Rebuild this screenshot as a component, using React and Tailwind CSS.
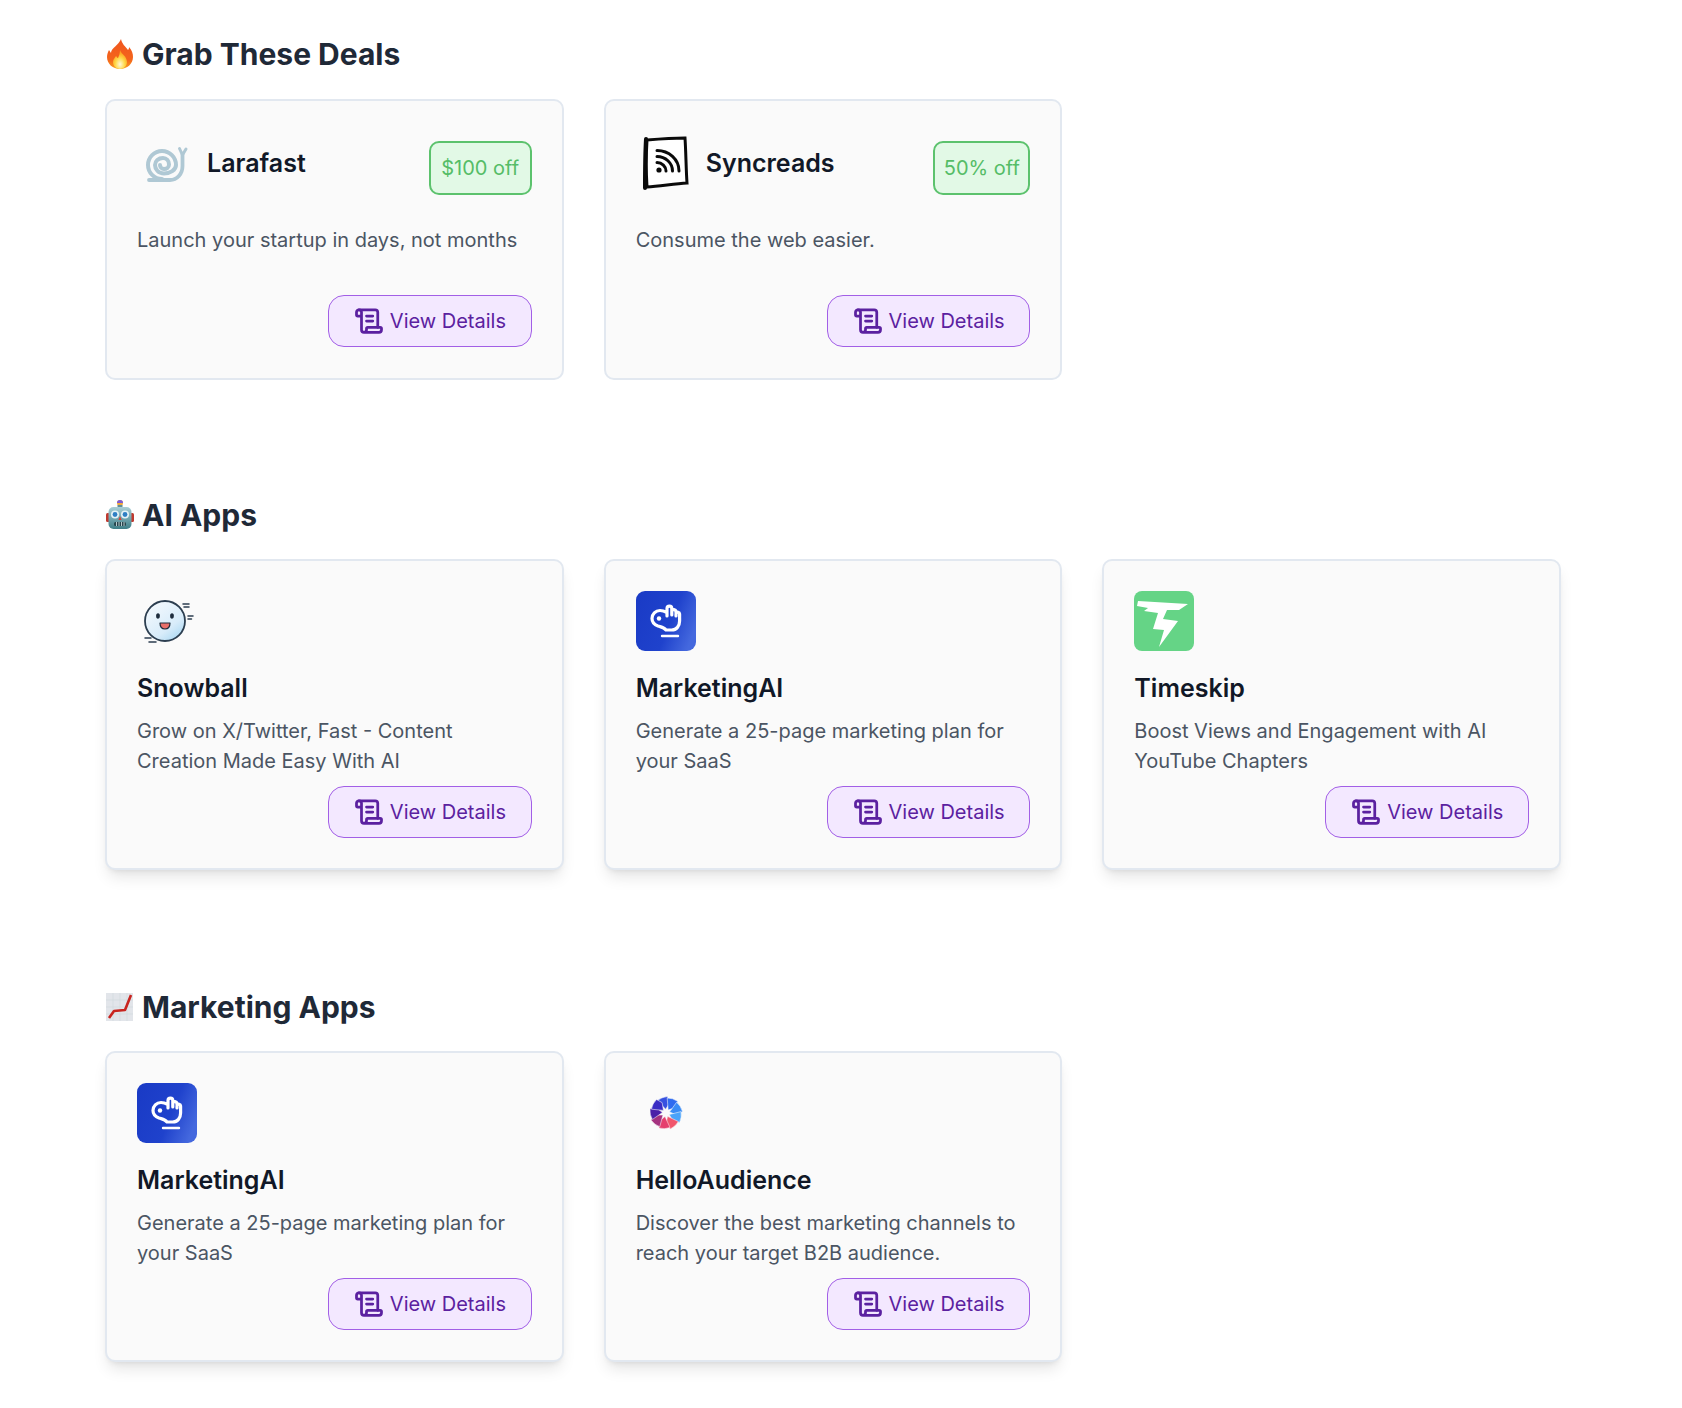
import { ScrollText } from "lucide-react";

const FireEmoji = () => (
  <svg viewBox="0 0 28 32" className="w-[28px] h-[32px] shrink-0">
    <defs>
      <linearGradient id="fireOuter" x1="0" y1="0" x2="0" y2="1">
        <stop offset="0" stopColor="#f0541e" />
        <stop offset="0.7" stopColor="#f4661c" />
        <stop offset="1" stopColor="#f9a11f" />
      </linearGradient>
      <radialGradient id="fireInner" cx="0.5" cy="0.75" r="0.6">
        <stop offset="0" stopColor="#fff8d8" />
        <stop offset="0.55" stopColor="#ffd94a" />
        <stop offset="1" stopColor="#fba41f" />
      </radialGradient>
    </defs>
    <path fill="url(#fireOuter)" d="M15 1c1 5 4 7 7 11 1-1 1-2 1-3 3 3 4 7 4 10 0 7-6 12-13 12S1 26 1 19c0-3 1-5 2-7l2 3c0-5 8-8 10-14z" />
    <path fill="url(#fireInner)" d="M14 12c1 4 7 6 7 12 0 4-3 7-7 7s-7-3-7-7c0-3 2-4 3-6 1 1 1 2 2 2 1-2 2-5 2-8z" />
  </svg>
);

const RobotEmoji = () => (
  <svg viewBox="0 0 28 32" className="w-[28px] h-[32px] shrink-0">
    <defs>
      <linearGradient id="robotHead" x1="0" y1="0" x2="0" y2="1">
        <stop offset="0" stopColor="#a9cfd6" />
        <stop offset="1" stopColor="#3f7f88" />
      </linearGradient>
    </defs>
    <circle cx="14" cy="4" r="3" fill="#f2a93b" />
    <path d="M11 4a3 3 0 0 1 6 0z" fill="#7c5cd6" />
    <rect x="11.5" y="6" width="5" height="3" fill="#5f8e98" />
    <rect x="0" y="14" width="4" height="9" rx="1.5" fill="#c0392f" />
    <rect x="24" y="14" width="4" height="9" rx="1.5" fill="#c0392f" />
    <rect x="2.5" y="8" width="23" height="22" rx="5" fill="url(#robotHead)" />
    <circle cx="9" cy="15.5" r="4" fill="#e6f2f6" />
    <circle cx="19" cy="15.5" r="4" fill="#e6f2f6" />
    <circle cx="9" cy="15.5" r="2.4" fill="#2f7fc4" />
    <circle cx="19" cy="15.5" r="2.4" fill="#2f7fc4" />
    <path d="M14 17l1.6 4h-3.2z" fill="#d4433a" />
    <rect x="8" y="23" width="12" height="4" rx="1.5" fill="#26464d" />
    <path d="M10.5 23v4M13 23v4M15.5 23v4M18 23v4" stroke="#b9c9cc" strokeWidth="1" />
  </svg>
);

const ChartEmoji = () => (
  <svg viewBox="0 0 28 32" className="w-[28px] h-[32px] shrink-0">
    <rect x="0" y="2" width="27" height="28" fill="#e2e5ea" />
    <path d="M0 9h27M0 16h27M0 23h27M7 2v28M14 2v28M21 2v28" stroke="#d2d6dc" strokeWidth="0.6" />
    <path d="M3 27l5-7 11-1 6-15" fill="none" stroke="#c8241f" strokeWidth="2.6" strokeLinejoin="round" />
  </svg>
);

const SnailLogo = () => (
  <svg viewBox="0 0 60 60" className="w-[60px] h-[60px] shrink-0" fill="none" stroke="#afc8d4" strokeLinecap="round" strokeLinejoin="round">
    <path strokeWidth="3.8" d="M12 47H33C40 47 45.500 41 45.500 33V21" />
    <path strokeWidth="3" d="M45 21L42.500 15.500M46 21L49 16" />
    <path strokeWidth="4" d="M25 46A14 14 0 1 1 39 32C39 37 33 40.500 27 40.500C21.500 40.500 18 36.500 18 32C18 28 21.500 25 26 25C29.500 25 32 28 32 31.500C32 34.500 29.500 36 27 36C24.500 36 23 34 23 32" />
  </svg>
);

const SyncreadsLogo = () => (
  <svg viewBox="0 0 60 60" className="w-[60px] h-[60px] shrink-0" fill="none" stroke="#0a0a0a" strokeLinecap="round">
    <path strokeWidth="3" fill="#ffffff" d="M11 7c12-1 26-2 38-2 1 15 1 31 2 45-13 1-27 3-40 4-1-15-1-31 0-47z" />
    <path strokeWidth="4" d="M10 6c-1 16-1 33-1 49" />
    <circle cx="23" cy="37" r="2.6" fill="#0a0a0a" stroke="none" />
    <path strokeWidth="3" d="M21 29.500c5 0 9 4 9 8.500M21 23.500c8.500 0 15.500 6.500 15.500 14.500M21 17.500c12 0 22 9 22 20.500" />
  </svg>
);

const SnowballLogo = () => (
  <svg viewBox="0 0 60 60" className="w-[60px] h-[60px] shrink-0">
    <defs>
      <linearGradient id="snowBody" x1="0.2" y1="0.1" x2="0.8" y2="0.9">
        <stop offset="0" stopColor="#f2f8fd" />
        <stop offset="0.7" stopColor="#d8ecfa" />
        <stop offset="1" stopColor="#b4dcf4" />
      </linearGradient>
    </defs>
    <g transform="translate(0 1)">
      <circle cx="28" cy="29" r="20" fill="url(#snowBody)" stroke="#2c3e50" strokeWidth="1.8" />
      <ellipse cx="21" cy="24" rx="1.9" ry="2.8" fill="#1f2d3d" />
      <ellipse cx="35" cy="24" rx="1.9" ry="2.8" fill="#1f2d3d" />
      <path d="M23 31h10c0 4-2.200 6-5 6s-5-2-5-6z" fill="#e86f6a" stroke="#1f2d3d" strokeWidth="1.200" strokeLinejoin="round" />
      <path d="M46 12h6M47 15h5M51 24h5M51 27h3.500M8 46h6M12 50h7" stroke="#2c3e50" strokeWidth="1.500" strokeLinecap="round" />
    </g>
  </svg>
);

const MarketingLogo = () => (
  <svg viewBox="0 0 60 60" className="w-[60px] h-[60px] shrink-0">
    <defs>
      <linearGradient id="marketingBg" x1="0" y1="0.2" x2="1" y2="0.6">
        <stop offset="0" stopColor="#1a3bc6" />
        <stop offset="0.6" stopColor="#1f42cc" />
        <stop offset="1" stopColor="#4468de" />
      </linearGradient>
    </defs>
    <rect width="60" height="60" rx="9" fill="url(#marketingBg)" />
    <path
      fill="none"
      stroke="#ffffff"
      strokeWidth="3.200"
      strokeLinecap="round"
      strokeLinejoin="round"
      d="M31 25V17.500a2.400 2.400 0 0 1 4.800 0V24M35.800 20a2.200 2.200 0 0 1 4.200 0.500V25M40 22a2 2 0 0 1 3.600 1V30c0 5-3 9-8 9H30c-2-3-5-3-8-4-4-1.500-6-4-6-7.500 0-4.500 3.500-8 8-8 3 0 5 1 7 2"
    />
    <circle cx="23" cy="27.500" r="2.200" fill="#ffffff" />
    <path d="M26 45h16" stroke="#ffffff" strokeWidth="2.400" strokeLinecap="round" />
  </svg>
);

const TimeskipLogo = () => (
  <svg viewBox="0 0 60 60" className="w-[60px] h-[60px] shrink-0">
    <rect width="60" height="60" rx="8" fill="#65d486" />
    <path fill="#ffffff" d="M4 10l50 3-9 6H33l-4 9 15 2-19 26 5-17-11-1 5-16-14-2 4-3-11-2z" />
  </svg>
);

const audiencePetals = [
  ["#3651e0", -20],
  ["#2f6bf0", 20],
  ["#3a8cf6", 60],
  ["#4aa3fa", 100],
  ["#f0566c", 140],
  ["#e53f6d", 180],
  ["#a5327f", 220],
  ["#4b20a8", 260],
  ["#3a2cc4", 300],
];

const AudienceLogo = () => (
  <svg viewBox="0 0 60 60" className="w-[60px] h-[60px] shrink-0">
    {audiencePetals.map(([color, angle]) => (
      <path
        key={angle}
        d="M31 26.500L26 15.500Q31 13.500 37 15L37 21.500z"
        fill={color}
        stroke="#fafafa"
        strokeWidth="0.5"
        strokeLinejoin="round"
        transform={`rotate(${angle} 30 30)`}
      />
    ))}
  </svg>
);

const ViewDetails = () => (
  <button className="self-end w-[203.5px] h-[52px] flex items-center justify-center gap-[6px] rounded-2xl border border-[#a25fe6] bg-[#f3e8ff] text-[#5b21a0] text-[20px]">
    <ScrollText className="w-[30px] h-[30px]" strokeWidth={2.2} />
    View Details
  </button>
);

const DealCard = ({ logo, name, deal, badgeWidth, desc }) => (
  <div className="flex flex-col rounded-[10px] border-2 border-[#e2e8f0] bg-[#fafafa] px-[30px] pt-[32px] pb-[31px]">
    <div className="flex justify-between">
      <div className="flex items-center gap-[10px] h-[60px]">
        {logo}
        <h3 className="pt-[2px] text-[25px] font-semibold text-[#111827]">{name}</h3>
      </div>
      <span className={`${badgeWidth} mt-[8px] h-[54px] flex items-center justify-center whitespace-nowrap rounded-[10px] border-2 border-[#5cc26d] bg-[#e2f9e6] text-[#55bd67] text-[20px]`}>
        {deal}
      </span>
    </div>
    <p className="mt-[30px] text-[20px] leading-[30px] text-[#4b5563]">{desc}</p>
    <div className="mt-[40px] flex flex-col">
      <ViewDetails />
    </div>
  </div>
);

const AppCard = ({ logo, name, desc }) => (
  <div className="flex flex-col rounded-[10px] border-2 border-[#e2e8f0] bg-[#fafafa] px-[30px] pt-[30px] pb-[30px] shadow-lg">
    {logo}
    <h3 className="mt-[21px] text-[25px] leading-[32px] font-semibold text-[#111827]">{name}</h3>
    <p className="mt-[12px] text-[20px] leading-[30px] text-[#4b5563]">{desc}</p>
    <div className="mt-[10px] flex flex-col">
      <ViewDetails />
    </div>
  </div>
);

const Section = ({ emoji, title, className, headingGap = "mb-[26px]", children }) => (
  <section className={className}>
    <h2 className={`flex items-center gap-[8px] h-[36px] pl-[1px] ${headingGap} text-[30px] font-bold text-[#1f2937]`}>
      {emoji}
      {title}
    </h2>
    <div className="grid grid-cols-3 gap-10">{children}</div>
  </section>
);

export default function App() {
  return (
    <div className="min-h-[1408px] bg-white pl-[105px] pt-[36px] pb-[40px] font-['Inter',sans-serif]">
      <div className="w-[1456px]">
        <Section emoji={<FireEmoji />} title="Grab These Deals" headingGap="mb-[27px]" className="mb-[117px]">
          <DealCard logo={<SnailLogo />} name="Larafast" deal="$100 off" badgeWidth="w-[103px]" desc="Launch your startup in days, not months" />
          <DealCard logo={<SyncreadsLogo />} name="Syncreads" deal="50% off" badgeWidth="w-[97px]" desc="Consume the web easier." />
        </Section>

        <Section emoji={<RobotEmoji />} title="AI Apps" className="mb-[119px]">
          <AppCard logo={<SnowballLogo />} name="Snowball" desc="Grow on X/Twitter, Fast - Content Creation Made Easy With AI" />
          <AppCard logo={<MarketingLogo />} name="MarketingAI" desc="Generate a 25-page marketing plan for your SaaS" />
          <AppCard logo={<TimeskipLogo />} name="Timeskip" desc="Boost Views and Engagement with AI YouTube Chapters" />
        </Section>

        <Section emoji={<ChartEmoji />} title="Marketing Apps">
          <AppCard logo={<MarketingLogo />} name="MarketingAI" desc="Generate a 25-page marketing plan for your SaaS" />
          <AppCard logo={<AudienceLogo />} name="HelloAudience" desc="Discover the best marketing channels to reach your target B2B audience." />
        </Section>
      </div>
    </div>
  );
}
